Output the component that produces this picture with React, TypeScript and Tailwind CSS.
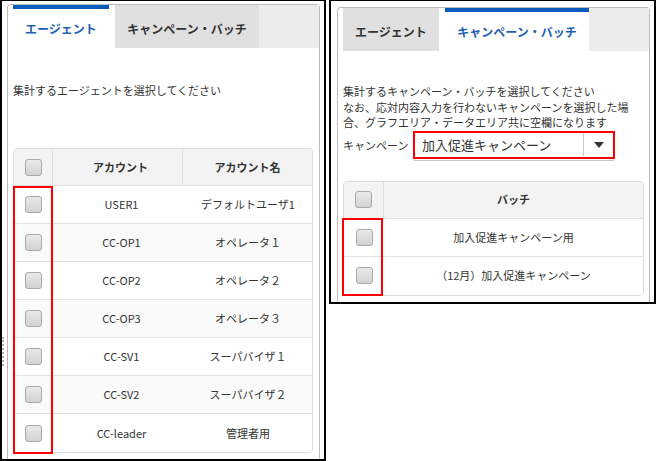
import React from 'react'

const agents = [
  { account: 'USER1', name: 'デフォルトユーザ1' },
  { account: 'CC-OP1', name: 'オペレータ１' },
  { account: 'CC-OP2', name: 'オペレータ２' },
  { account: 'CC-OP3', name: 'オペレータ３' },
  { account: 'CC-SV1', name: 'スーパバイザ１' },
  { account: 'CC-SV2', name: 'スーパバイザ２' },
  { account: 'CC-leader', name: '管理者用' },
]

const batches = ['加入促進キャンペーン用', '（12月）加入促進キャンペーン']

const CheckBox = () => (
  <div className="h-[17px] w-[17px] rounded-[3px] border border-[#a9a9a9] bg-linear-to-b from-[#e9e9e9] to-[#d2d2d2]" />
)

const Tabs = ({ active }: { active: number }) => (
  <div className="flex h-[43px] pl-[5px]">
    {['エージェント', 'キャンペーン・バッチ'].map((label, i) => (
      <div
        key={label}
        className={
          (i === 0 ? 'w-[96px] ' : 'ml-[6px] w-[144px] ') +
          (i === active
            ? 'border-t-4 border-[#0c5bbd] bg-white text-[#1d5fb5]'
            : 'bg-[#e0e0e0] pt-[4px] text-[#333]') +
          ' flex items-center justify-center text-[12px] font-bold'
        }
      >
        {label}
      </div>
    ))}
    <div className="flex-1 bg-[#ececec]" />
  </div>
)

const Frame = ({ className, children }: { className: string; children: React.ReactNode }) => (
  <div className={'relative overflow-hidden border-2 border-t border-black ' + className}>{children}</div>
)

export default function App() {
  return (
    <div className="flex h-[461px] w-[656px] items-start bg-white font-['Noto_Sans_CJK_JP',sans-serif] text-[#333]">
      <Frame className="h-[461px] w-[326px] pl-[5px] pt-[3px]">
        <div className="absolute left-0 top-[336px] h-[29px] border-l-2 border-dotted border-[#b0b0b0]" />
        <div className="h-[470px] w-[313px] rounded-t-[4px] border border-b-0 border-[#bcbcbc]">
          <Tabs active={0} />
          <div className="px-[5px]">
            <p className="mt-[34px] text-[11px] leading-[16px]">集計するエージェントを選択してください</p>
            <div className="relative mt-[50px] w-[300px]">
              <div className="overflow-hidden rounded-[4px] border border-[#dcdcdc] text-[11px]">
                <div className="flex h-[37px] border-b border-[#e0e0e0] bg-[#f3f3f3] font-bold">
                  <div className="flex w-[39px] items-center justify-center border-r border-[#e0e0e0]">
                    <CheckBox />
                  </div>
                  <div className="flex w-[130px] items-center justify-center border-r border-[#e0e0e0] pl-[6px]">アカウント</div>
                  <div className="flex flex-1 items-center justify-center">アカウント名</div>
                </div>
                {agents.map((a, i) => (
                  <div
                    key={a.account}
                    className={
                      'flex h-[38px] ' +
                      (i < agents.length - 1 ? 'border-b border-[#e2e2e2] ' : '') +
                      (i % 2 === 1 ? 'bg-[#fafafa]' : 'bg-white')
                    }
                  >
                    <div className="flex w-[39px] items-center justify-center">
                      <CheckBox />
                    </div>
                    <div className="flex w-[131px] items-center justify-center pl-[6px]">{a.account}</div>
                    <div className="flex flex-1 items-center justify-center">{a.name}</div>
                  </div>
                ))}
              </div>
              <div className="absolute left-0 top-[38px] h-[268px] w-[40px] border-2 border-[#ff0000]" />
            </div>
          </div>
        </div>
      </Frame>

      <Frame className="ml-[3px] h-[304px] w-[327px] pl-[6px] pt-[6px]">
        <div className="h-[320px] w-[313px] rounded-t-[4px] border border-b-0 border-[#bcbcbc]">
          <Tabs active={1} />
          <div className="px-[5px]">
            <p className="mt-[33px] whitespace-nowrap text-[11px] leading-[15.5px]">
              集計するキャンペーン・バッチを選択してください
              <br />
              なお、応対内容入力を行わないキャンペーンを選択した場
              <br />
              合、グラフエリア・データエリア共に空欄になります
            </p>
            <div className="flex items-center">
              <span className="w-[70px] text-[11px]">キャンペーン</span>
              <div className="flex flex-col">
                <div className="flex h-[28px] w-[202px] items-center border-2 border-[#ff0000] bg-white">
                  <span className="flex-1 pl-[7px] text-[13px] leading-none">加入促進キャンペーン</span>
                  <div className="h-[23px] border-l border-[#c8c8c8]" />
                  <div className="flex w-[29px] justify-center">
                    <div className="h-0 w-0 border-x-[5px] border-t-[6px] border-x-transparent border-t-[#333]" />
                  </div>
                </div>
                <div className="mx-[1px] mt-[1px] h-px bg-[#c8c8c8]" />
              </div>
            </div>
            <div className="relative mt-[20px] w-[301px]">
              <div className="overflow-hidden rounded-[4px] border border-[#dcdcdc] text-[11px]">
                <div className="flex h-[37px] border-b border-[#e0e0e0] bg-[#f3f3f3] font-bold">
                  <div className="flex w-[40px] items-center justify-center border-r border-[#e0e0e0]">
                    <CheckBox />
                  </div>
                  <div className="flex flex-1 items-center justify-center">バッチ</div>
                </div>
                {batches.map((b, i) => (
                  <div
                    key={b}
                    className={'flex h-[38px] bg-white ' + (i < batches.length - 1 ? 'border-b border-[#e2e2e2]' : '')}
                  >
                    <div className="flex w-[40px] items-center justify-center">
                      <CheckBox />
                    </div>
                    <div className="flex flex-1 items-center justify-center">{b}</div>
                  </div>
                ))}
              </div>
              <div className="absolute -left-[1px] top-[37px] h-[78px] w-[41px] border-2 border-[#ff0000]" />
            </div>
          </div>
        </div>
      </Frame>
    </div>
  )
}
